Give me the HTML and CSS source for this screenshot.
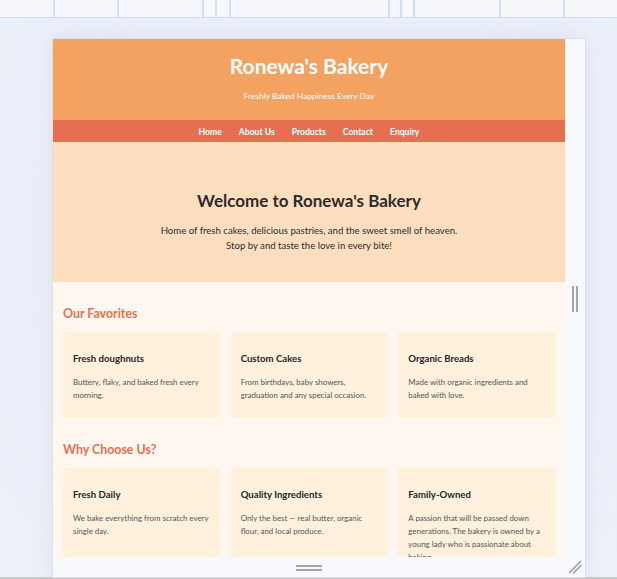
FILE: index.html
```html
<!DOCTYPE html>
<html lang="en">
<head>
<meta charset="utf-8">
<title>Ronewa's Bakery</title>
<link rel="stylesheet" href="styles.css">
</head>
<body>
<div class="topbar"></div>
<div class="stage">
  <div class="frame">
    <div class="viewport">
      <header class="site-header">
        <h1>Ronewa's Bakery</h1>
        <p>Freshly Baked Happiness Every Day</p>
      </header>
      <nav class="site-nav">
        <a href="#">Home</a>
        <a href="#">About Us</a>
        <a href="#">Products</a>
        <a href="#">Contact</a>
        <a href="#">Enquiry</a>
      </nav>
      <section class="hero">
        <h2>Welcome to Ronewa's Bakery</h2>
        <p>Home of fresh cakes, delicious pastries, and the sweet smell of heaven.<br>Stop by and taste the love in every bite!</p>
      </section>
      <main class="content">
        <section class="block">
          <h2>Our Favorites</h2>
          <div class="cards">
            <div class="card"><h3>Fresh doughnuts</h3><p>Buttery, flaky, and baked fresh every morning.</p></div>
            <div class="card"><h3>Custom Cakes</h3><p>From birthdays, baby showers, graduation and any special occasion.</p></div>
            <div class="card"><h3>Organic Breads</h3><p>Made with organic ingredients and baked with love.</p></div>
          </div>
        </section>
        <section class="block">
          <h2>Why Choose Us?</h2>
          <div class="cards">
            <div class="card"><h3>Fresh Daily</h3><p>We bake everything from scratch every single day.</p></div>
            <div class="card"><h3>Quality Ingredients</h3><p>Only the best — real butter, organic flour, and local produce.</p></div>
            <div class="card"><h3>Family-Owned</h3><p>A passion that will be passed down generations. The bakery is owned by a young lady who is passionate about baking.</p></div>
          </div>
        </section>
      </main>
    </div>
    <div class="scrollbar"><span class="grip"></span><span class="grip"></span></div>
    <div class="footbar"><span class="handle"></span></div>
    <div class="corner">
      <svg width="20" height="20" viewBox="0 0 20 20" aria-hidden="true">
        <line x1="4" y1="16" x2="16" y2="4" stroke="#9a9a9a" stroke-width="1.6"/>
        <line x1="8" y1="16.5" x2="16.5" y2="8" stroke="#9a9a9a" stroke-width="1.6"/>
      </svg>
    </div>
  </div>
</div>
</body>
</html>
```

FILE: styles.css
```css
* { box-sizing: border-box; }

html, body {
  margin: 0;
  padding: 0;
  width: 617px;
  height: 579px;
  overflow: hidden;
  font-family: Lato, "Open Sans", sans-serif;
  background: #ebeff8;
}

.topbar {
  height: 18px;
  background-color: #f7f8fc;
  border-bottom: 1px solid #cfdcf5;
  background-image:
    linear-gradient(#d3dff6, #d3dff6),
    linear-gradient(#d3dff6, #d3dff6),
    linear-gradient(#d3dff6, #d3dff6),
    linear-gradient(#d3dff6, #d3dff6),
    linear-gradient(#d3dff6, #d3dff6),
    linear-gradient(#d3dff6, #d3dff6),
    linear-gradient(#d3dff6, #d3dff6),
    linear-gradient(#d3dff6, #d3dff6),
    linear-gradient(#d3dff6, #d3dff6),
    linear-gradient(#d3dff6, #d3dff6);
  background-repeat: no-repeat;
  background-size: 2px 17px;
  background-position: 53px 0, 117px 0, 202px 0, 215px 0, 229px 0, 388px 0, 400px 0, 413px 0, 499px 0, 563px 0;
}

.stage {
  height: 561px;
  padding: 21px 0 0 53px;
  border-bottom: 2px solid #c9c9cb;
  background: radial-gradient(ellipse at 50% 40%, #ebeef7 0%, #eaeef8 60%, #ecf0f9 100%);
}

.frame {
  display: grid;
  grid-template-columns: 512px 20px;
  grid-template-rows: 518px 20px;
  width: 532px;
  height: 538px;
  background: #f8f9fd;
  box-shadow: 0 0 0 1px #dcdfe6, 0 0 18px rgba(120, 130, 160, 0.12);
}

.viewport {
  overflow: hidden;
  background: #fff7f0;
}

/* header */
.site-header {
  height: 81px;
  background: #f3a262;
  color: #fff;
  text-align: center;
  padding-top: 14px;
}
.site-header h1 {
  margin: 0;
  font-size: 21px;
  line-height: 26px;
  font-weight: 700;
}
.site-header p {
  margin: 12px 0 0;
  font-size: 8.4px;
  line-height: 11px;
}

.site-nav {
  height: 22px;
  background: #e66f52;
  display: flex;
  justify-content: center;
  align-items: center;
  gap: 17px;
  padding-top: 2px;
}
.site-nav a {
  color: #fff;
  text-decoration: none;
  font-weight: 700;
  font-size: 8.6px;
}

.hero {
  height: 140px;
  background: #fddfc0;
  text-align: center;
  padding-top: 48px;
  color: #2b2b2b;
}
.hero h2 {
  margin: 0 0 11px;
  font-size: 17px;
  line-height: 22px;
  font-weight: 700;
}
.hero p {
  margin: 0;
  font-size: 9.6px;
  line-height: 15px;
}

.content {
  padding: 0 10px 20px;
}
.block {
  padding-top: 24px;
}
.block h2 {
  margin: 0 0 10px;
  font-size: 12.4px;
  line-height: 16px;
  font-weight: 700;
  color: #e76f51;
}

.cards {
  display: grid;
  grid-template-columns: repeat(3, 1fr);
  gap: 11px;
}
.card {
  background: #fff1dc;
  border-radius: 3px;
  padding: 10px 10px 8px;
}
.card h3 {
  margin: 10px 0 11px;
  font-size: 9.6px;
  line-height: 13px;
  font-weight: 700;
  color: #262626;
}
.card p {
  margin: 0 0 7px;
  font-size: 7.9px;
  line-height: 13.3px;
  color: #555;
}

.scrollbar {
  display: flex;
  justify-content: center;
  gap: 2px;
  padding-top: 247px;
  background: #f8f9fd;
}
.grip {
  width: 2px;
  height: 26px;
  background: #a3a3a8;
}

.footbar {
  display: flex;
  justify-content: center;
  padding-top: 8px;
}
.handle {
  width: 26px;
  height: 6px;
  border-top: 2px solid #a6a6a6;
  border-bottom: 2px solid #a6a6a6;
}

.corner svg { display: block; }
```
